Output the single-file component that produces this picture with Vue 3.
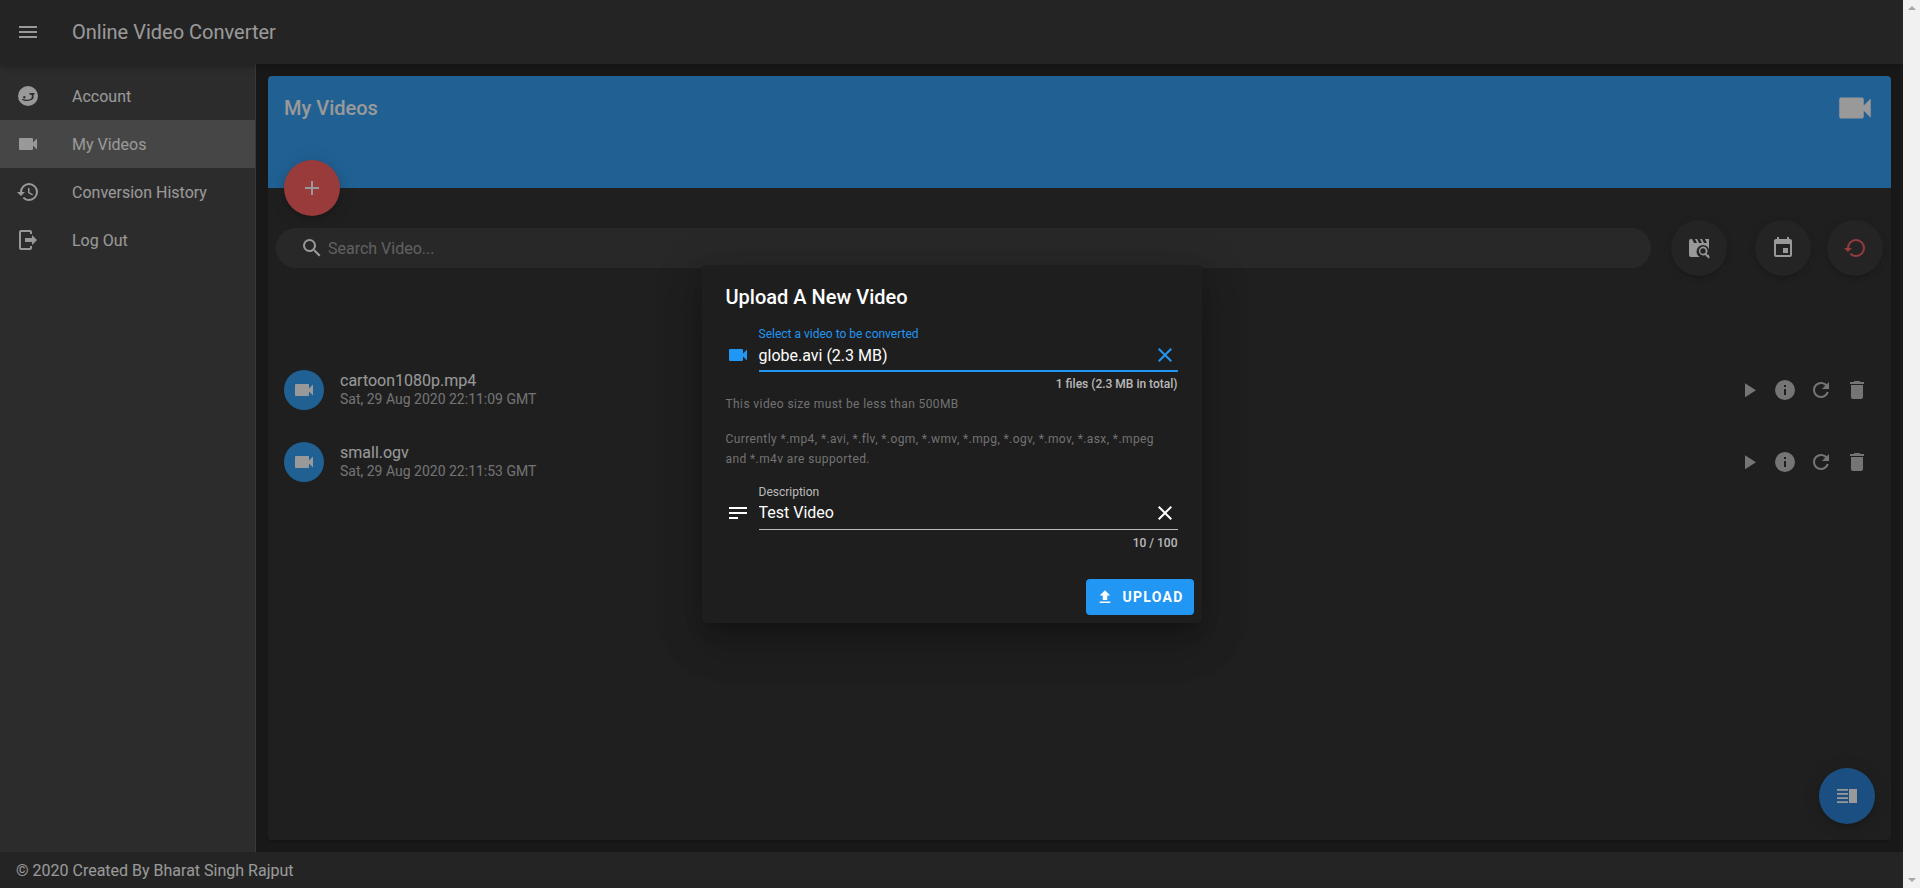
<script setup>
import { ref } from 'vue'

const icons = {
  menu: 'M3,6H21V8H3V6M3,11H21V13H3V11M3,16H21V18H3V16Z',
  video: 'M17,10.5V7A1,1 0 0,0 16,6H4A1,1 0 0,0 3,7V17A1,1 0 0,0 4,18H16A1,1 0 0,0 17,17V13.5L21,17.5V6.5L17,10.5Z',
  face: 'M12,2A10,10 0 1,0 12,22A10,10 0 1,0 12,2ZM8.3,12A1.2,1.2 0 1,1 8.3,14.4A1.2,1.2 0 1,1 8.3,12ZM13.5,9H18.5V10.8H17.5V14.6C15,17.4 9.5,18 5.8,15.6L6.4,14.8C9.5,16.4 13.2,16.2 15.7,14V10.8H13.5Z',
  history: 'M13.5,8H12V13L16.28,15.54L17,14.33L13.5,12.25V8M13,3A9,9 0 0,0 4,12H1L4.96,16.03L9,12H6A7,7 0 0,1 13,5A7,7 0 0,1 20,12A7,7 0 0,1 13,19C11.07,19 9.32,18.21 8.06,16.94L6.64,18.36C8.27,20 10.5,21 13,21A9,9 0 0,0 22,12A9,9 0 0,0 13,3',
  logout: 'M16,17V14H9V10H16V7L21,12L16,17M14,2A2,2 0 0,1 16,4V6H14V4H5V20H14V18H16V20A2,2 0 0,1 14,22H5A2,2 0 0,1 3,20V4A2,2 0 0,1 5,2H14Z',
  plus: 'M19,13H13V19H11V13H5V11H11V5H13V11H19V13Z',
  search: 'M9.5,3A6.5,6.5 0 0,1 16,9.5C16,11.11 15.41,12.59 14.44,13.73L14.71,14H15.5L20.5,19L19,20.5L14,15.5V14.71L13.73,14.44C12.59,15.41 11.11,16 9.5,16A6.5,6.5 0 0,1 3,9.5A6.5,6.5 0 0,1 9.5,3M9.5,5C7,5 5,7 5,9.5C5,12 7,14 9.5,14C12,14 14,12 14,9.5C14,7 12,5 9.5,5Z',
  calendar: 'M19,19H5V8H19M16,1V3H8V1H6V3H5C3.89,3 3,3.89 3,5V19A2,2 0 0,0 5,21H19A2,2 0 0,0 21,19V5C21,3.89 20.1,3 19,3H18V1M17,12H12V17H17V12Z',
  restore: 'M13,3A9,9 0 0,0 4,12H1L4.89,15.89L4.96,16.03L9,12H6A7,7 0 0,1 13,5A7,7 0 0,1 20,12A7,7 0 0,1 13,19C11.07,19 9.32,18.21 8.06,16.94L6.64,18.36C8.27,20 10.5,21 13,21A9,9 0 0,0 22,12A9,9 0 0,0 13,3Z',
  play: 'M8,5.14V19.14L19,12.14L8,5.14Z',
  info: 'M13,9H11V7H13M13,17H11V11H13M12,2A10,10 0 0,0 2,12A10,10 0 0,0 12,22A10,10 0 0,0 22,12A10,10 0 0,0 12,2Z',
  refresh: 'M17.65,6.35C16.2,4.9 14.21,4 12,4A8,8 0 0,0 4,12A8,8 0 0,0 12,20C15.73,20 18.84,17.45 19.73,14H17.65C16.83,16.33 14.61,18 12,18A6,6 0 0,1 6,12A6,6 0 0,1 12,6C13.66,6 15.14,6.69 16.22,7.78L13,11H20V4L17.65,6.35Z',
  trash: 'M19,4H15.5L14.5,3H9.5L8.5,4H5V6H19M6,19A2,2 0 0,0 8,21H16A2,2 0 0,0 18,19V7H6V19Z',
  close: 'M19,6.41L17.59,5L12,10.59L6.41,5L5,6.41L10.59,12L5,17.59L6.41,19L12,13.41L17.59,19L19,17.59L13.41,12L19,6.41Z',
  text: 'M21,6V8H3V6H21M3,18H12V16H3V18M3,13H21V11H3V13Z',
  upload: 'M9,16V10H5L12,3L19,10H15V16H9M5,20V18H19V20H5Z',
  panel: 'M2,5H13V6.8H2ZM2,9H13V10.8H2ZM2,13.2H13V15H2ZM2,17.2H13V19H2ZM14,5H22V19H14Z',
}

const navItems = [
  { label: 'Account', icon: 'face' },
  { label: 'My Videos', icon: 'video', active: true },
  { label: 'Conversion History', icon: 'history' },
  { label: 'Log Out', icon: 'logout' },
]

const videos = [
  { name: 'cartoon1080p.mp4', date: 'Sat, 29 Aug 2020 22:11:09 GMT' },
  { name: 'small.ogv', date: 'Sat, 29 Aug 2020 22:11:53 GMT' },
]

const rowActions = ['play', 'info', 'refresh', 'trash']
const description = ref('Test Video')
</script>

<template>
  <div class="page">
    <div class="app">
      <header class="topbar">
        <svg class="icon" viewBox="0 0 24 24"><path :d="icons.menu" /></svg>
        <div class="app-title">Online Video Converter</div>
      </header>

      <div class="middle">
        <nav class="sidebar">
          <a v-for="item in navItems" :key="item.label" class="nav-item" :class="{ active: item.active }">
            <svg class="icon" viewBox="0 0 24 24"><path :d="icons[item.icon]" /></svg>
            <span>{{ item.label }}</span>
          </a>
        </nav>

        <main class="content">
          <section class="card">
            <div class="banner">
              <h1>My Videos</h1>
              <svg class="banner-icon" viewBox="0 0 24 24"><path :d="icons.video" /></svg>
              <button class="add-btn">
                <svg class="icon" viewBox="0 0 24 24"><path :d="icons.plus" /></svg>
              </button>
            </div>

            <div class="tools">
              <label class="search">
                <svg class="icon" viewBox="0 0 24 24"><path :d="icons.search" /></svg>
                <input type="text" placeholder="Search Video..." />
              </label>
              <button class="round first">
                <svg class="icon" viewBox="0 0 24 24">
                  <mask id="movie-cut">
                    <rect width="24" height="24" fill="#fff" />
                    <circle cx="16" cy="15.5" r="6.5" fill="#000" />
                  </mask>
                  <path mask="url(#movie-cut)" d="M18,3L20,7H17L15,3H13L15,7H12L10,3H8L10,7H7L5,3H4A2,2 0 0,0 2,5V19A2,2 0 0,0 4,21H20A2,2 0 0,0 22,19V3H18Z" />
                  <path d="M16,10.5A4.5,4.5 0 0,1 19.6,17.7L22.9,21L21.5,22.4L18.2,19.1A4.5,4.5 0 1,1 16,10.5M16,12.3A2.7,2.7 0 1,0 16,17.7A2.7,2.7 0 1,0 16,12.3Z" />
                </svg>
              </button>
              <button class="round second">
                <svg class="icon" viewBox="0 0 24 24"><path :d="icons.calendar" /></svg>
              </button>
              <button class="round third">
                <svg class="icon red" viewBox="0 0 24 24"><path :d="icons.restore" /></svg>
              </button>
            </div>

            <ul class="videos">
              <li v-for="video in videos" :key="video.name" class="video">
                <div class="avatar">
                  <svg class="icon" viewBox="0 0 24 24"><path :d="icons.video" /></svg>
                </div>
                <div class="video-text">
                  <div class="video-name">{{ video.name }}</div>
                  <div class="video-date">{{ video.date }}</div>
                </div>
                <div class="video-actions">
                  <button v-for="action in rowActions" :key="action" class="action">
                    <svg class="icon" viewBox="0 0 24 24"><path :d="icons[action]" /></svg>
                  </button>
                </div>
              </li>
            </ul>

            <button class="panel-btn">
              <svg class="icon" viewBox="0 0 24 24"><path :d="icons.panel" /></svg>
            </button>
          </section>
        </main>
      </div>

      <footer class="footer">© 2020 Created By Bharat Singh Rajput</footer>

      <div class="overlay"></div>

      <div class="dialog-wrap">
        <div class="dialog">
          <h2>Upload A New Video</h2>

          <div class="field focused">
            <svg class="icon field-icon" viewBox="0 0 24 24"><path :d="icons.video" /></svg>
            <div class="field-main">
              <div class="field-label">Select a video to be converted</div>
              <div class="field-row">
                <span class="field-value">globe.avi (2.3 MB)</span>
                <svg class="icon" viewBox="0 0 24 24"><path :d="icons.close" /></svg>
              </div>
              <div class="field-count">1 files (2.3 MB in total)</div>
            </div>
          </div>

          <p class="hint">This video size must be less than 500MB</p>
          <p class="hint formats">Currently *.mp4, *.avi, *.flv, *.ogm, *.wmv, *.mpg, *.ogv, *.mov, *.asx, *.mpeg and *.m4v are supported.</p>

          <div class="field desc">
            <svg class="icon field-icon" viewBox="0 0 24 24"><path :d="icons.text" /></svg>
            <div class="field-main">
              <div class="field-label">Description</div>
              <div class="field-row">
                <input v-model="description" class="field-value" type="text" />
                <svg class="icon" viewBox="0 0 24 24"><path :d="icons.close" /></svg>
              </div>
              <div class="field-count">10 / 100</div>
            </div>
          </div>

          <div class="dialog-actions">
            <button class="upload-btn">
              <svg class="icon" viewBox="0 0 24 24"><path :d="icons.upload" /></svg>
              Upload
            </button>
          </div>
        </div>
      </div>
    </div>

    <div class="scrollbar">
      <span class="arrow up"></span>
      <span class="arrow down"></span>
    </div>
  </div>
</template>

<style scoped>
.page {
  display: flex;
  height: 888px;
  font-family: Roboto, "Liberation Sans", sans-serif;
}

.app {
  position: relative;
  flex: 1;
  min-width: 0;
  display: flex;
  flex-direction: column;
  background: #121212;
  color: #fff;
  overflow: hidden;
}

.icon {
  width: 24px;
  height: 24px;
  flex: none;
  fill: currentColor;
  display: block;
}

.topbar {
  height: 64px;
  flex: none;
  display: flex;
  align-items: center;
  gap: 32px;
  padding: 0 16px;
  background: #272727;
  box-shadow: 0 2px 4px -1px rgba(0, 0, 0, 0.2), 0 4px 5px rgba(0, 0, 0, 0.14), 0 1px 10px rgba(0, 0, 0, 0.12);
  z-index: 1;
}

.app-title {
  font-size: 20px;
  font-weight: 400;
}

.middle {
  flex: 1;
  min-height: 0;
  display: flex;
}

.sidebar {
  width: 256px;
  flex: none;
  box-sizing: border-box;
  padding-top: 8px;
  background: #363636;
  border-right: 1px solid rgba(255, 255, 255, 0.12);
}

.nav-item {
  height: 48px;
  display: flex;
  align-items: center;
  gap: 32px;
  padding: 0 16px;
  font-size: 16px;
  font-weight: 400;
}

.nav-item.active {
  background: rgba(255, 255, 255, 0.24);
}

.content {
  flex: 1;
  min-width: 0;
  display: flex;
  padding: 12px;
}

.card {
  position: relative;
  flex: 1;
  min-width: 0;
  background: #1e1e1e;
  border-radius: 4px;
  box-shadow: 0 3px 1px -2px rgba(0, 0, 0, 0.2), 0 2px 2px rgba(0, 0, 0, 0.14), 0 1px 5px rgba(0, 0, 0, 0.12);
}

.banner {
  position: relative;
  height: 112px;
  box-sizing: border-box;
  display: flex;
  justify-content: space-between;
  padding: 16px;
  background: #2196f3;
  border-radius: 4px 4px 0 0;
}

.banner h1 {
  margin: 0;
  font-size: 20px;
  font-weight: 500;
  line-height: 32px;
}

.banner-icon {
  width: 42px;
  height: 42px;
  margin: -5px -1px 0 0;
  fill: #fff;
}

.add-btn {
  position: absolute;
  left: 16px;
  bottom: -28px;
  width: 56px;
  height: 56px;
  padding: 16px;
  border: 0;
  border-radius: 50%;
  color: #fff;
  background: #ff5252;
  box-shadow: 0 3px 5px -1px rgba(0, 0, 0, 0.2), 0 6px 10px rgba(0, 0, 0, 0.14), 0 1px 18px rgba(0, 0, 0, 0.12);
}

.tools {
  display: flex;
  align-items: center;
  margin-top: 32px;
  padding: 0 8px;
}

.search {
  flex: 1;
  height: 40px;
  display: flex;
  align-items: center;
  gap: 4px;
  padding-left: 24px;
  border-radius: 20px;
  background: rgba(255, 255, 255, 0.08);
}

.search input {
  flex: 1;
  min-width: 0;
  border: 0;
  outline: 0;
  padding: 0;
  background: transparent;
  color: #fff;
  font: 16px Roboto, "Liberation Sans", sans-serif;
}

.search input::placeholder {
  color: rgba(255, 255, 255, 0.5);
}

.round {
  width: 56px;
  height: 56px;
  padding: 16px;
  border: 0;
  border-radius: 50%;
  color: #fff;
  background: #272727;
  box-shadow: 0 3px 3px -2px rgba(0, 0, 0, 0.2), 0 3px 4px rgba(0, 0, 0, 0.14), 0 1px 8px rgba(0, 0, 0, 0.12);
}

.round.first { margin-left: 20px; }
.round.second { margin-left: 28px; }
.round.third { margin-left: 16px; }

.icon.red {
  color: #ff5252;
}

.videos {
  list-style: none;
  margin: 78px 0 0;
  padding: 0;
}

.video {
  height: 72px;
  display: flex;
  align-items: center;
  padding: 0 16px;
}

.avatar {
  width: 40px;
  height: 40px;
  flex: none;
  display: flex;
  align-items: center;
  justify-content: center;
  border-radius: 50%;
  background: #2196f3;
}

.video-text {
  flex: 1;
  min-width: 0;
  margin-left: 16px;
}

.video-name {
  font-size: 16px;
  line-height: 18px;
}

.video-date {
  font-size: 14px;
  line-height: 18px;
  color: rgba(255, 255, 255, 0.7);
}

.video-actions {
  display: flex;
}

.action {
  width: 36px;
  height: 36px;
  padding: 6px;
  border: 0;
  background: none;
  color: rgba(255, 255, 255, 0.7);
}

.panel-btn {
  position: absolute;
  right: 16px;
  bottom: 16px;
  width: 56px;
  height: 56px;
  padding: 16px;
  border: 0;
  border-radius: 50%;
  color: #fff;
  background: #1976d2;
  box-shadow: 0 3px 5px -1px rgba(0, 0, 0, 0.2), 0 6px 10px rgba(0, 0, 0, 0.14), 0 1px 18px rgba(0, 0, 0, 0.12);
}

.footer {
  height: 36px;
  flex: none;
  display: flex;
  align-items: center;
  padding: 0 16px;
  font-size: 16px;
  background: #272727;
}

.overlay {
  position: absolute;
  inset: 0;
  z-index: 2;
  background: rgba(33, 33, 33, 0.46);
}

.dialog-wrap {
  position: absolute;
  inset: 0;
  z-index: 3;
  display: flex;
  align-items: center;
  justify-content: center;
}

.dialog {
  width: 500px;
  box-sizing: border-box;
  padding: 16px 24px 8px;
  background: #1e1e1e;
  border-radius: 4px;
  box-shadow: 0 11px 15px -7px rgba(0, 0, 0, 0.2), 0 24px 38px 3px rgba(0, 0, 0, 0.14), 0 9px 46px 8px rgba(0, 0, 0, 0.12);
}

.dialog h2 {
  margin: 0 0 12px;
  font-size: 20px;
  font-weight: 500;
  line-height: 32px;
}

.field {
  display: flex;
  gap: 9px;
}

.field-icon {
  margin-top: 18px;
}

.field-main {
  flex: 1;
  min-width: 0;
}

.field-label {
  font-size: 12px;
  line-height: 16px;
  color: rgba(255, 255, 255, 0.7);
}

.field-row {
  height: 25px;
  display: flex;
  align-items: center;
  justify-content: space-between;
  padding: 0 1px 4px 0;
  border-bottom: 1px solid rgba(255, 255, 255, 0.7);
}

.field-value {
  flex: 1;
  min-width: 0;
  border: 0;
  outline: 0;
  padding: 0;
  background: transparent;
  color: #fff;
  font: 16px Roboto, "Liberation Sans", sans-serif;
}

.field-count {
  margin-top: 5px;
  font-size: 12px;
  line-height: 16px;
  font-weight: 500;
  text-align: right;
  color: rgba(255, 255, 255, 0.7);
}

.focused .field-label,
.focused .field-icon,
.focused .field-row .icon {
  color: #2196f3;
}

.focused .field-label {
  margin-top: 1px;
}

.focused .field-row {
  height: 26px;
  padding-bottom: 2px;
  border-bottom: 2px solid #2196f3;
}

.focused .field-count {
  margin-top: 4px;
}

.hint {
  margin: 2px 0 0;
  font-size: 12px;
  line-height: 20px;
  letter-spacing: 0.0333em;
  color: rgba(255, 255, 255, 0.38);
}

.hint.formats {
  margin-top: 15px;
}

.desc {
  margin-top: 15px;
}

.desc .field-icon {
  margin-top: 17px;
}

.dialog-actions {
  display: flex;
  justify-content: flex-end;
  margin: 28px -16px 0 0;
}

.upload-btn {
  height: 36px;
  display: flex;
  align-items: center;
  gap: 9px;
  padding: 0 10px;
  border: 0;
  border-radius: 4px;
  color: #fff;
  background: #2196f3;
  font: 700 14px Roboto, "Liberation Sans", sans-serif;
  letter-spacing: 0.0892em;
  text-transform: uppercase;
}

.upload-btn .icon {
  width: 18px;
  height: 18px;
}

.scrollbar {
  width: 17px;
  flex: none;
  display: flex;
  flex-direction: column;
  justify-content: space-between;
  align-items: center;
  padding: 6px 0;
  box-sizing: border-box;
  background: #f1f1f1;
}

.arrow {
  width: 0;
  height: 0;
  border-left: 4px solid transparent;
  border-right: 4px solid transparent;
}

.arrow.up {
  border-bottom: 4px solid #a3a3a3;
}

.arrow.down {
  border-top: 4px solid #a3a3a3;
}
</style>

<style>
html,
body {
  margin: 0;
  overflow: hidden;
}
</style>
